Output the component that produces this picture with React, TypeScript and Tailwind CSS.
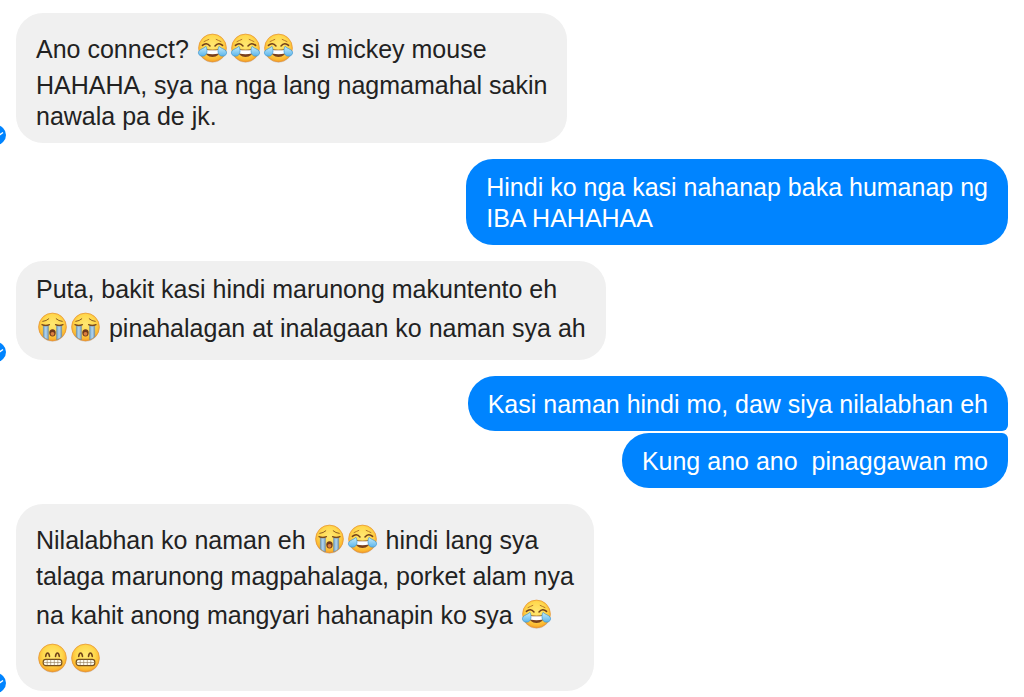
import { Fragment } from "react"
import { clsx } from "clsx"

type Mood = "joy" | "sob" | "grin"

interface Message {
  id: number
  mine?: boolean
  group?: "first" | "last"
  // each entry is one line; :joy: :sob: :grin: turn into emoji
  lines: string[]
}

const MESSAGES: Message[] = [
  {
    id: 1,
    lines: [
      "Ano connect? :joy::joy::joy: si mickey mouse",
      "HAHAHA, sya na nga lang nagmamahal sakin",
      "nawala pa de jk."
    ]
  },
  { id: 2, mine: true, lines: ["Hindi ko nga kasi nahanap baka humanap ng", "IBA HAHAHAA"] },
  {
    id: 3,
    lines: [
      "Puta, bakit kasi hindi marunong makuntento eh",
      ":sob::sob: pinahalagan at inalagaan ko naman sya ah"
    ]
  },
  { id: 4, mine: true, group: "first", lines: ["Kasi naman hindi mo, daw siya nilalabhan eh"] },
  { id: 5, mine: true, group: "last", lines: ["Kung ano ano  pinaggawan mo"] },
  {
    id: 6,
    lines: [
      "Nilalabhan ko naman eh :sob::joy: hindi lang sya",
      "talaga marunong magpahalaga, porket alam nya",
      "na kahit anong mangyari hahanapin ko sya :joy:",
      ":grin::grin:"
    ]
  }
]

function EmojiDefs() {
  return (
    <svg className="absolute size-0" aria-hidden="true">
      <defs>
        <radialGradient id="face" cx="0.5" cy="0.4" r="0.62">
          <stop offset="0" stopColor="#ffe873" />
          <stop offset="0.55" stopColor="#ffd84d" />
          <stop offset="0.85" stopColor="#fbb52f" />
          <stop offset="1" stopColor="#ec9025" />
        </radialGradient>
        <linearGradient id="tear" x1="0" y1="0" x2="0" y2="1">
          <stop offset="0" stopColor="#c5ecfc" />
          <stop offset="1" stopColor="#5cb5ea" />
        </linearGradient>
        <linearGradient id="stream" x1="0" y1="0" x2="1" y2="0">
          <stop offset="0" stopColor="#6c9fc9" />
          <stop offset="0.5" stopColor="#b4d6ee" />
          <stop offset="1" stopColor="#7198bd" />
        </linearGradient>
      </defs>
    </svg>
  )
}

function Joy() {
  return (
    <>
      <g fill="none" stroke="#74421a" strokeWidth="1.5" strokeLinecap="round">
        <path d="M6.4 20.4Q10.4 16.6 14 21" />
        <path d="M19 21Q22.6 16.6 26.6 20.4" />
        <path d="M8 16.6Q10.5 15.4 12.8 14.4" strokeWidth="0.9" stroke="#ad6c26" />
        <path d="M20.2 14.4Q22.5 15.4 25 16.6" strokeWidth="0.9" stroke="#ad6c26" />
      </g>
      <path d="M8.2 24Q16.5 25.4 24.8 24Q23.4 32 16.5 32Q9.6 32 8.2 24Z" fill="#79401c" />
      <path d="M9.2 24.7Q16.5 25.9 23.8 24.7L22.8 28.6Q16.5 30 10.2 28.6Z" fill="#fff" />
      <path d="M10 21.4C11.8 24.6 11.4 30.4 7.4 31.1C3.4 31.7 1.4 28.4 3 26C4.4 24 7.8 23.4 10 21.4Z" fill="url(#tear)" stroke="#3f97d2" strokeWidth="0.7" />
      <path d="M23 21.4C21.2 24.6 21.6 30.4 25.6 31.1C29.6 31.7 31.6 28.4 30 26C28.6 24 25.2 23.4 23 21.4Z" fill="url(#tear)" stroke="#3f97d2" strokeWidth="0.7" />
    </>
  )
}

function Sob() {
  return (
    <>
      <path d="M7.3 21.4H12.4V35.8Q9.2 34.6 7.3 32.8Z" fill="url(#stream)" stroke="#6485a3" strokeWidth="0.5" />
      <path d="M20.6 21.4H25.7V32.8Q23.8 34.6 20.6 35.8Z" fill="url(#stream)" stroke="#6485a3" strokeWidth="0.5" />
      <g fill="none" stroke="#7d4b1c" strokeWidth="1.3" strokeLinecap="round">
        <path d="M6 20.6Q9.8 22.4 13.4 20.6" />
        <path d="M19.6 20.6Q23.2 22.4 27 20.6" />
        <path d="M6.8 17.4Q10.4 17 12.8 14.8" strokeWidth="0.9" />
        <path d="M20.2 14.8Q22.6 17 26.2 17.4" strokeWidth="0.9" />
      </g>
      <ellipse cx="16.5" cy="28.8" rx="3.2" ry="3.6" fill="#70391a" />
      <ellipse cx="16.5" cy="29.8" rx="1.9" ry="1.9" fill="#dc8040" />
    </>
  )
}

function Grin() {
  return (
    <>
      <g fill="none" stroke="#70431a" strokeWidth="1.6" strokeLinecap="round" strokeLinejoin="round">
        <path d="M9.7 21.4Q10.2 18 11.6 18Q13 18 13.5 21.4" />
        <path d="M19.5 21.4Q20 18 21.4 18Q22.8 18 23.3 21.4" />
      </g>
      <rect x="7.2" y="24.4" width="18.6" height="6.2" rx="2.7" fill="#fffdf0" stroke="#76501f" strokeWidth="1.2" />
      <path d="M8 27.5H25M11.2 24.8V30.2M14.7 24.8V30.2M18.3 24.8V30.2M21.8 24.8V30.2" stroke="#8f7956" strokeWidth="0.6" />
    </>
  )
}

const FACES = { joy: Joy, sob: Sob, grin: Grin }

function Emoji({ mood }: { mood: Mood }) {
  const Face = FACES[mood]
  return (
    <svg
      viewBox="0 1 33 44"
      role="img"
      aria-label={mood}
      className="inline-block h-11 w-[33px] align-[-12px]"
    >
      <circle cx="16.5" cy="24" r="13.8" fill="#000" opacity="0.1" />
      <circle cx="16.5" cy="23" r="13.9" fill="url(#face)" stroke="#e59232" strokeWidth="0.7" />
      <Face />
    </svg>
  )
}

function Line({ text }: { text: string }) {
  const parts = text.split(/:(joy|sob|grin):/)
  return (
    <span className="block">
      {parts.map((part, i) => (
        <Fragment key={i}>{i % 2 ? <Emoji mood={part as Mood} /> : part}</Fragment>
      ))}
    </span>
  )
}

function SeenBadge() {
  return (
    <svg viewBox="0 0 16 20" className="-mb-0.5 h-5 w-4 shrink-0" aria-hidden="true">
      <circle cx="-4" cy="10" r="10" fill="#0084ff" />
      <path d="M-8 10L-5 13L3 7.5" fill="none" stroke="#fff" strokeWidth="1.5" />
    </svg>
  )
}

function Bubble({ message }: { message: Message }) {
  const { mine, group, lines } = message
  return (
    <li
      className={clsx(
        "flex items-end pr-4",
        mine && "justify-end",
        group === "last" ? "mt-0.5" : "mt-4 first:mt-0"
      )}
    >
      {!mine && <SeenBadge />}
      <p
        className={clsx(
          "rounded-[27px] pt-[13px] pr-5 pb-[11px] pl-5 whitespace-pre-wrap",
          mine ? "bg-[#0084ff] text-white" : "bg-[#f0f0f0] text-[#222]",
          group === "first" && "rounded-br-md",
          group === "last" && "rounded-tr-md"
        )}
      >
        {lines.map((line) => (
          <Line key={line} text={line} />
        ))}
      </p>
    </li>
  )
}

export default function App() {
  return (
    <main className="min-h-screen overflow-hidden bg-white pt-[13px] pb-1 font-['Liberation_Sans',Arial,sans-serif] text-[25px] leading-[31px]">
      <EmojiDefs />
      <ul>
        {MESSAGES.map((message) => (
          <Bubble key={message.id} message={message} />
        ))}
      </ul>
    </main>
  )
}
